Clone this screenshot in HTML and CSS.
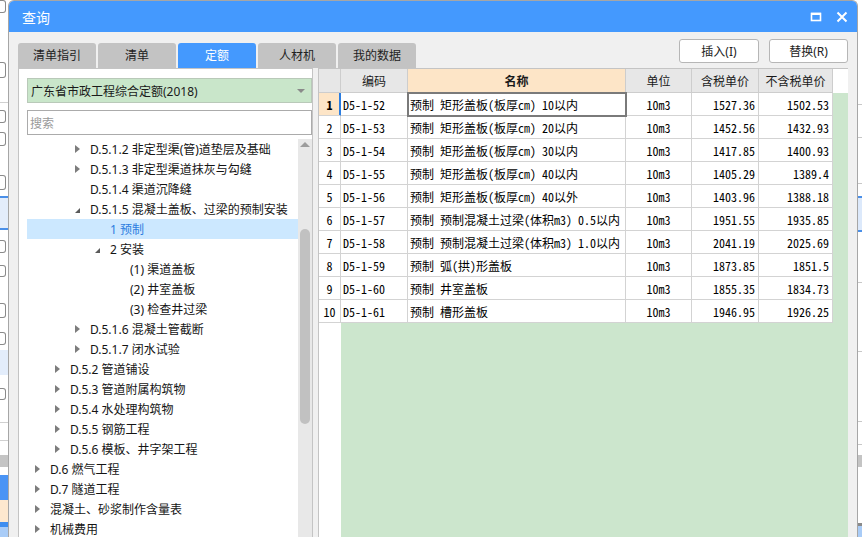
FILE: index.html
```html
<!DOCTYPE html>
<html lang="zh-CN">
<head>
<meta charset="utf-8">
<title>查询</title>
<link rel="stylesheet" href="styles.css">
</head>
<body>
<div class="screen">
  <div class="bg-left">
    <div class="bl-box lb1"></div>
    <div class="bl-box lb2"></div>
    <div class="bl-line ll1"></div>
    <div class="bl-box lb3"></div>
    <div class="bl-box lb4"></div>
    <div class="bl-box lb5"></div>
    <div class="bl-sel"></div>
    <div class="bl-box lb6"></div>
    <div class="bl-box lb7"></div>
    <div class="bl-box lb8"></div>
    <div class="bl-box lb9"></div>
    <div class="bl-light"></div>
    <div class="bl-box lb10"></div>
    <div class="bl-line ll2"></div>
    <div class="bl-line ll3"></div>
    <div class="bl-band lband"></div>
    <div class="bl-blue"></div>
    <div class="bl-peach"></div>
    <div class="bl-bar"></div>
    <div class="bl-rest"></div>
  </div>
  <div class="dialog">
    <div class="titlebar">
      <span class="title">查询</span>
      <div class="win-btns">
        <svg class="wb" width="12" height="12" viewBox="0 0 12 12"><rect x="1.5" y="2.5" width="9" height="7" fill="none" stroke="#fff" stroke-width="1.6"/><rect x="1" y="1.8" width="10" height="2.2" fill="#fff"/></svg>
        <svg class="wb" width="12" height="12" viewBox="0 0 12 12"><path d="M1.5 1.5 L10.5 10.5 M10.5 1.5 L1.5 10.5" stroke="#fff" stroke-width="2"/></svg>
      </div>
    </div>
    <div class="body">
      <div class="toolbar">
        <div class="tabs">
          <div class="tab">清单指引</div>
          <div class="tab">清单</div>
          <div class="tab active">定额</div>
          <div class="tab">人材机</div>
          <div class="tab">我的数据</div>
        </div>
        <div class="actions">
          <button class="btn">插入(I)</button>
          <button class="btn">替换(R)</button>
        </div>
      </div>
      <div class="content">
        <div class="left-panel">
          <div class="select">广东省市政工程综合定额(2018)<span class="caret"></span></div>
          <div class="search">搜索</div>
          <div class="tree-wrap">
            <div class="tree">
              <div class="row l2"><i class="tw closed"></i><span>D.5.1.2 非定型渠(管)道垫层及基础</span></div>
              <div class="row l2"><i class="tw closed"></i><span>D.5.1.3 非定型渠道抹灰与勾缝</span></div>
              <div class="row l2"><i class="tw"></i><span>D.5.1.4 渠道沉降缝</span></div>
              <div class="row l2"><i class="tw open"></i><span>D.5.1.5 混凝土盖板、过梁的预制安装</span></div>
              <div class="row l3 selected"><i class="tw"></i><span>1 预制</span></div>
              <div class="row l3"><i class="tw open"></i><span>2 安装</span></div>
              <div class="row l4"><i class="tw"></i><span>(1) 渠道盖板</span></div>
              <div class="row l4"><i class="tw"></i><span>(2) 井室盖板</span></div>
              <div class="row l4"><i class="tw"></i><span>(3) 检查井过梁</span></div>
              <div class="row l2"><i class="tw closed"></i><span>D.5.1.6 混凝土管截断</span></div>
              <div class="row l2"><i class="tw closed"></i><span>D.5.1.7 闭水试验</span></div>
              <div class="row l1"><i class="tw closed"></i><span>D.5.2 管道铺设</span></div>
              <div class="row l1"><i class="tw closed"></i><span>D.5.3 管道附属构筑物</span></div>
              <div class="row l1"><i class="tw closed"></i><span>D.5.4 水处理构筑物</span></div>
              <div class="row l1"><i class="tw closed"></i><span>D.5.5 钢筋工程</span></div>
              <div class="row l1"><i class="tw closed"></i><span>D.5.6 模板、井字架工程</span></div>
              <div class="row l0"><i class="tw closed"></i><span>D.6 燃气工程</span></div>
              <div class="row l0"><i class="tw closed"></i><span>D.7 隧道工程</span></div>
              <div class="row l0"><i class="tw closed"></i><span>混凝土、砂浆制作含量表</span></div>
              <div class="row l0"><i class="tw closed"></i><span>机械费用</span></div>
            </div>
            <div class="scrollbar">
              <div class="sb-up"></div>
              <div class="sb-thumb"></div>
            </div>
          </div>
        </div>
        <div class="grid-panel">
          <div class="grow head">
            <div class="c"></div>
            <div class="c">编码</div>
            <div class="c name-h">名称</div>
            <div class="c">单位</div>
            <div class="c">含税单价</div>
            <div class="c">不含税单价</div>
            <div class="c fill"></div>
          </div>
          <div class="grow sel">
            <div class="c num">1</div><div class="c code">D5-1-52</div><div class="c name">预制 矩形盖板(板厚㎝) 10以内</div><div class="c unit">10m3</div><div class="c pr">1527.36</div><div class="c pr">1502.53</div>
          </div>
          <div class="grow">
            <div class="c num">2</div><div class="c code">D5-1-53</div><div class="c name">预制 矩形盖板(板厚㎝) 20以内</div><div class="c unit">10m3</div><div class="c pr">1452.56</div><div class="c pr">1432.93</div>
          </div>
          <div class="grow">
            <div class="c num">3</div><div class="c code">D5-1-54</div><div class="c name">预制 矩形盖板(板厚㎝) 30以内</div><div class="c unit">10m3</div><div class="c pr">1417.85</div><div class="c pr">1400.93</div>
          </div>
          <div class="grow">
            <div class="c num">4</div><div class="c code">D5-1-55</div><div class="c name">预制 矩形盖板(板厚㎝) 40以内</div><div class="c unit">10m3</div><div class="c pr">1405.29</div><div class="c pr">1389.4</div>
          </div>
          <div class="grow">
            <div class="c num">5</div><div class="c code">D5-1-56</div><div class="c name">预制 矩形盖板(板厚㎝) 40以外</div><div class="c unit">10m3</div><div class="c pr">1403.96</div><div class="c pr">1388.18</div>
          </div>
          <div class="grow">
            <div class="c num">6</div><div class="c code">D5-1-57</div><div class="c name">预制 预制混凝土过梁(体积m3) 0.5以内</div><div class="c unit">10m3</div><div class="c pr">1951.55</div><div class="c pr">1935.85</div>
          </div>
          <div class="grow">
            <div class="c num">7</div><div class="c code">D5-1-58</div><div class="c name">预制 预制混凝土过梁(体积m3) 1.0以内</div><div class="c unit">10m3</div><div class="c pr">2041.19</div><div class="c pr">2025.69</div>
          </div>
          <div class="grow">
            <div class="c num">8</div><div class="c code">D5-1-59</div><div class="c name">预制 弧(拱)形盖板</div><div class="c unit">10m3</div><div class="c pr">1873.85</div><div class="c pr">1851.5</div>
          </div>
          <div class="grow">
            <div class="c num">9</div><div class="c code">D5-1-60</div><div class="c name">预制 井室盖板</div><div class="c unit">10m3</div><div class="c pr">1855.35</div><div class="c pr">1834.73</div>
          </div>
          <div class="grow">
            <div class="c num">10</div><div class="c code">D5-1-61</div><div class="c name">预制 槽形盖板</div><div class="c unit">10m3</div><div class="c pr">1946.95</div><div class="c pr">1926.25</div>
          </div>
        </div>
      </div>
    </div>
  </div>
  <div class="bg-right">
    <div class="br-line rl1"></div>
    <div class="br-line rl2"></div>
    <div class="br-line rl3"></div>
    <div class="br-sel"></div>
    <div class="br-line rl4"></div>
    <div class="br-line rl5"></div>
    <div class="br-line rl6"></div>
    <div class="br-line rl7"></div>
    <div class="bl-band rband"></div>
    <div class="br-dark"></div>
    <div class="bl-rest"></div>
  </div>
</div>
</body>
</html>
```
FILE: styles.css
```css
* { box-sizing: border-box; }
html, body { margin: 0; padding: 0; }
body {
  width: 862px; height: 537px; overflow: hidden; background: #fff;
  font-family: "Noto Sans", "Noto Sans CJK SC", "Microsoft YaHei", sans-serif;
  font-size: 12px; color: #1a1a1a;
}
.screen { display: flex; width: 862px; height: 537px; overflow: hidden; }

/* underlying app strips (left) */
.bg-left { width: 8px; flex: none; background: #fff; display: flex; flex-direction: column; }
.bl-box { width: 6px; flex: none; border: 1px solid #8a8a8a; border-left: none; border-radius: 0 3px 3px 0; height: 13px; }
.lb1 { margin-top: 0; }
.lb2 { margin-top: 49px; height: 16px; }
.lb3 { margin-top: 7px; }
.lb4 { margin-top: 9px; height: 14px; }
.lb5 { margin-top: 29px; height: 15px; }
.lb6 { margin-top: 10px; }
.lb7 { margin-top: 12px; height: 12px; }
.lb8 { margin-top: 26px; height: 15px; }
.lb9 { margin-top: 14px; }
.lb10 { margin-top: 13px; height: 12px; }
.bl-line { height: 1px; flex: none; background: #d0d0d0; }
.ll1 { margin-top: 24px; }
.ll2 { margin-top: 22px; }
.ll3 { margin-top: 17px; }
.bl-sel { height: 34px; flex: none; margin-top: 6px; border-top: 2px solid #4a8fe8; border-bottom: 2px solid #4a8fe8; background: #e3edfb; }
.bl-light { height: 25px; flex: none; margin-top: 5px; background: #e3edfb; }
.bl-band { height: 12px; flex: none; background: #c4c4c4; }
.lband { margin-top: 14px; }
.bl-blue { height: 25px; flex: none; margin-top: 8px; background: #4a94f5; }
.bl-peach { height: 22px; flex: none; background: #fde8cf; }
.bl-bar { height: 5px; flex: none; background: #3f8ef0; }
.bl-rest { flex: 1; background: #a9ccf7; }

/* underlying app strips (right) */
.bg-right { flex: 1; background: #fff; display: flex; flex-direction: column; }
.br-line { height: 1px; flex: none; background: #c8c8c8; }
.rl1 { margin-top: 104px; }
.rl2 { margin-top: 32px; }
.rl3 { margin-top: 45px; }
.rl4 { margin-top: 50px; }
.rl5 { margin-top: 68px; }
.rl6 { margin-top: 69px; }
.rl7 { margin-top: 22px; }
.br-sel { height: 36px; flex: none; margin-top: 12px; background: #dce9fb; border-top: 2px solid #4a8fe8; border-bottom: 2px solid #4a8fe8; }
.rband { margin-top: 10px; }
.br-dark { height: 3px; flex: none; margin-top: 56px; background: #8a8a8a; }

/* dialog */
.dialog {
  width: 850px; flex: none; height: 560px;
  border: 1px solid #a6a6a6; border-bottom: none;
  border-radius: 6px 6px 0 0; overflow: hidden;
  display: flex; flex-direction: column; background: #f0f0f0;
}
.titlebar {
  height: 31px; flex: none; background: #4499fe;
  display: flex; align-items: center; justify-content: space-between;
  padding: 0 9px 0 13px;
}
.title { color: #fff; font-size: 14px; }
.win-btns { display: flex; gap: 14px; align-items: center; }
.wb { display: block; }

.body { flex: 1; display: flex; flex-direction: column; padding: 0 9px; }
.toolbar { height: 36px; flex: none; display: flex; justify-content: space-between; }
.tabs { display: flex; gap: 2px; align-self: flex-end; }
.tab {
  width: 78px; height: 25px; line-height: 25px; text-align: center;
  background: #c3c3c3; color: #222; font-size: 12px;
  border-radius: 3px 3px 0 0;
}
.tab.active { background: #4499fe; color: #fff; }
.actions { display: flex; gap: 10px; margin-top: 7px; align-self: flex-start; }
.btn {
  width: 80px; height: 24px; padding: 0;
  background: #fff; border: 1px solid #b6b6b6; border-radius: 3px;
  font-family: inherit; font-size: 12px; color: #222;
}
.btn + .btn { width: 79px; }

.content { flex: 1; display: flex; gap: 5px; min-height: 0; }

/* left panel */
.left-panel {
  width: 295px; flex: none; background: #fff;
  border: 1px solid #c4c4c4; border-bottom: none;
  padding: 9px 0 0 8px; display: flex; flex-direction: column; overflow: hidden;
}
.select {
  width: 285px; height: 25px; flex: none;
  background: #c9e6ca; border: 1px solid #b9c9b9;
  display: flex; align-items: center; justify-content: space-between;
  padding: 0 4px 0 3px; font-size: 12px; color: #1a1a1a;
}
.caret { width: 0; height: 0; border-top: 4px solid #8a8a8a; border-left: 4px solid transparent; border-right: 4px solid transparent; margin-right: 2px; }
.search {
  width: 285px; height: 25px; flex: none; margin-top: 7px;
  border: 1px solid #ababab; background: #fff;
  display: flex; align-items: center; padding-left: 2px; color: #9a9a9a; font-size: 12px;
}
.tree-wrap { flex: 1; display: flex; margin-top: 4px; width: 285px; min-height: 0; }
.tree { flex: 1; overflow: hidden; }
.row { height: 20px; display: flex; align-items: center; white-space: nowrap; color: #141414; }
.row.selected { background: #cce8ff; color: #2b7de0; }
.l0 { padding-left: 8px; }
.l1 { padding-left: 28px; }
.l2 { padding-left: 48px; }
.l3 { padding-left: 68px; }
.l4 { padding-left: 88px; }
.tw { width: 15px; height: 20px; flex: none; display: flex; align-items: center; }
.tw.closed::before {
  content: ""; width: 0; height: 0;
  border-left: 5px solid #7d7d7d; border-top: 4px solid transparent; border-bottom: 4px solid transparent;
}
.tw.open::before {
  content: ""; width: 0; height: 0; margin-top: 3px;
  border-bottom: 5px solid #5a5a5a; border-left: 5px solid transparent;
}
.scrollbar { width: 14px; flex: none; background: #e8e8e8; display: flex; flex-direction: column; align-items: center; }
.sb-up {
  width: 0; height: 0; margin-top: 3px;
  border-bottom: 5px solid #9c9c9c; border-left: 5px solid transparent; border-right: 5px solid transparent;
}
.sb-thumb { width: 10px; height: 195px; margin-top: 82px; background: #c1c1c1; border-radius: 5px; }

/* grid */
.grid-panel {
  flex: 1; border: 1px solid #c4c4c4; border-bottom: none; border-right: none;
  background: linear-gradient(to right, #fff 22px, #cce6cd 22px);
  font-family: "Noto Sans Mono CJK SC", "Noto Sans CJK SC", monospace;
  font-size: 12px; color: #000;
}
.grow {
  display: grid;
  grid-template-columns: 22px 67px 218px 66px 67px 74px 1fr;
  height: 23px;
}
.grow .c {
  border-right: 1px solid #d3d3d3; border-bottom: 1px solid #d3d3d3;
  background: #fff; display: flex; align-items: center; white-space: nowrap; overflow: hidden;
}
.grow.head { height: 24px; background: #fff; }
.grow.head .c {
  background: #e7e7e7; justify-content: center;
  font-family: "Noto Sans CJK SC", sans-serif; font-size: 12px; color: #1a1a1a;
  border-color: #cdcdcd;
}
.grow.head .c.fill { background: #fff; border: none; }
.grow.head .name-h { background: #fde5c7; font-weight: bold; }
.c.num { justify-content: center; }
.c.code { padding-left: 2px; }
.c.name { padding-left: 2px; }
.c.unit { justify-content: center; }
.c.pr { justify-content: flex-end; padding-right: 3px; }
.sel .c.num { background: #fde5c7; font-weight: bold; border-right: 1px solid #2b7de0; box-shadow: inset -1px 0 0 #2b7de0; }
.sel .c.name { outline: 2px solid #7a7a7a; outline-offset: -1px; position: relative; z-index: 1; }
```
